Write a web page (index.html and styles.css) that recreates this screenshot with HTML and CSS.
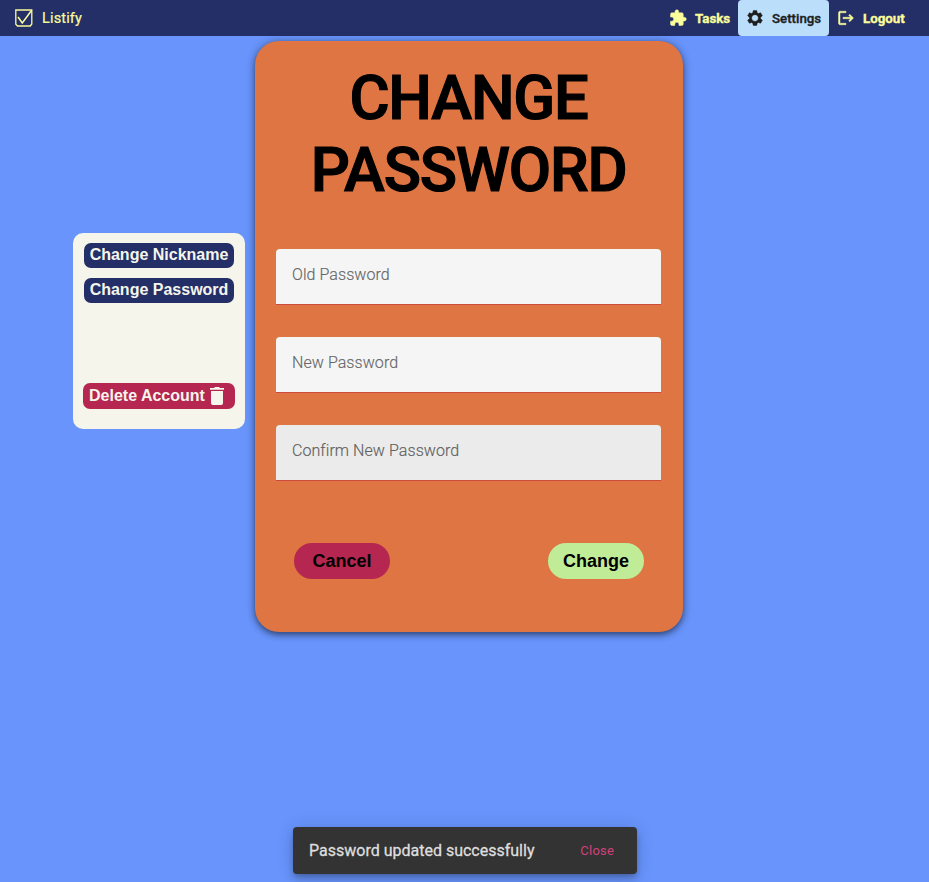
FILE: index.html
```html
<!DOCTYPE html>
<html lang="en">
<head>
<meta charset="utf-8">
<title>Listify</title>
<link rel="stylesheet" href="styles.css">
</head>
<body>
<header class="topbar">
  <a class="brand">
    <svg class="brand-icon" viewBox="0 0 18 18" fill="none" stroke="currentColor"><path d="M.8 1h16v14l-1.500 2H2.500L.8 15.200z" stroke-width="1.300"/><path d="M3 8l4.300 6L16.500 1.500" stroke-width="1.500"/></svg>
    <span>Listify</span>
  </a>
  <nav class="nav">
    <a class="nav-item tasks"><svg viewBox="0 0 24 24"><path d="M20.500 11H19V7c0-1.100-.9-2-2-2h-4V3.500C13 2.120 11.880 1 10.500 1S8 2.120 8 3.500V5H4c-1.100 0-1.990.9-1.990 2v3.800H3.500c1.490 0 2.700 1.210 2.700 2.700s-1.210 2.700-2.700 2.700H2V20c0 1.100.9 2 2 2h3.800v-1.500c0-1.490 1.210-2.700 2.700-2.700 1.490 0 2.700 1.210 2.700 2.700V22H17c1.100 0 2-.9 2-2v-4h1.500c1.380 0 2.500-1.120 2.500-2.500S21.880 11 20.500 11z"/></svg><span>Tasks</span></a>
    <a class="nav-item settings active"><svg viewBox="0 0 24 24"><path d="M19.430 12.980c.04-.32.070-.64.070-.98s-.03-.66-.07-.98l2.110-1.650c.19-.15.240-.42.120-.64l-2-3.460c-.12-.22-.39-.3-.61-.22l-2.490 1c-.52-.4-1.080-.73-1.690-.98l-.38-2.650C14.460 2.180 14.250 2 14 2h-4c-.25 0-.46.180-.49.420l-.38 2.650c-.61.250-1.170.590-1.690.980l-2.490-1c-.23-.09-.49 0-.61.220l-2 3.460c-.13.220-.07.490.120.640l2.110 1.650c-.04.320-.07.650-.07.980s.03.660.070.980l-2.110 1.650c-.19.150-.24.420-.12.640l2 3.460c.12.220.39.300.61.220l2.490-1c.52.400 1.080.730 1.690.980l.38 2.650c.03.240.24.420.49.420h4c.25 0 .46-.18.490-.42l.38-2.650c.61-.25 1.170-.59 1.690-.98l2.490 1c.23.090.49 0 .61-.22l2-3.460c.12-.22.070-.49-.12-.64l-2.110-1.650zM12 16.500c-2.490 0-4.500-2.010-4.500-4.500s2.010-4.500 4.500-4.500 4.500 2.010 4.500 4.500-2.010 4.500-4.500 4.500z"/></svg><span>Settings</span></a>
    <a class="nav-item logout"><svg viewBox="0 0 24 24"><path d="M17 7l-1.410 1.410L18.170 11H8v2h10.170l-2.580 2.580L17 17l5-5zM4 5h8V3H4c-1.100 0-2 .9-2 2v14c0 1.100.9 2 2 2h8v-2H4V5z"/></svg><span>Logout</span></a>
  </nav>
</header>
<main class="page">
  <aside class="side-menu">
    <button class="side-button">Change Nickname</button>
    <button class="side-button">Change Password</button>
    <button class="side-button delete"><span>Delete Account</span><svg viewBox="0 0 14 18"><path d="M1 4h12v12.300q0 1.700-1.700 1.700H2.700Q1 18 1 16.300zM0 1h4l1-1h4l1 1h4v1.800H0z"/></svg></button>
  </aside>
  <form class="card">
    <h1>CHANGE PASSWORD</h1>
    <div class="fields">
      <label class="field">Old Password</label>
      <label class="field">New Password</label>
      <label class="field hovered">Confirm New Password</label>
    </div>
    <div class="actions">
      <button type="button" class="pill cancel">Cancel</button>
      <button type="button" class="pill change">Change</button>
    </div>
  </form>
</main>
<div class="toast" role="status"><span>Password updated successfully</span><button>Close</button></div>
</body>
</html>
```

FILE: styles.css
```css
* { box-sizing: border-box; }
body {
  margin: 0;
  height: 882px;
  overflow: hidden;
  background: #6894fb;
  font-family: Roboto, "Liberation Sans", sans-serif;
}
button { border: 0; padding: 0; font-family: "Liberation Sans", sans-serif; }
.topbar {
  display: flex;
  justify-content: space-between;
  height: 36px;
  padding: 0 16px 0 15px;
  background: #232f66;
  color: #fbfc9b;
}
.brand { display: flex; align-items: center; gap: 9px; letter-spacing: .15px; }
.brand span { font-size: 14.500px; -webkit-text-stroke: .2px; }
.brand-icon { width: 18px; height: 18px; }
.nav { display: flex; }
.nav-item {
  display: flex;
  align-items: center;
  gap: 8px;
  padding: 0 8px;
  border-radius: 4px;
  font-size: 13.300px;
  font-weight: 700;
}
.nav-item svg { flex: none; width: 18px; height: 18px; fill: currentColor; stroke: currentColor; stroke-width: .6px; overflow: visible; }
.nav-item span { padding-top: 1px; -webkit-text-stroke: .35px; }
.nav-item.tasks { width: 77px; }
.nav-item.settings { width: 91px; }
.nav-item.logout { width: 84px; }
.nav-item.active { background: #bbdefb; color: #1e1e1e; font-weight: 500; }
.page { display: flex; align-items: flex-start; gap: 10px; padding: 5px 0 0 73px; }
.side-menu {
  display: flex;
  flex-direction: column;
  align-items: center;
  width: 172px;
  height: 196px;
  margin-top: 192px;
  padding-top: 10px;
  border-radius: 10px;
  background: #f5f5ec;
}
.side-button {
  width: 150px;
  height: 25px;
  margin-bottom: 10px;
  padding-bottom: 2px;
  border-radius: 7px;
  background: #232f66;
  color: #f5f5ec;
  font-size: 16px;
  font-weight: 700;
  white-space: nowrap;
}
.side-button.delete {
  display: flex;
  align-items: center;
  gap: 5px;
  width: 152px;
  height: 26px;
  margin-top: 70px;
  padding: 0 6px;
  background: #b52650;
}
.delete svg { width: 14px; height: 18px; flex: none; fill: currentColor; }
.card {
  width: 428px;
  height: 591px;
  padding: 21px 22px 20px 21px;
  border-radius: 24px;
  background: #df7543;
  box-shadow: 0 3px 5px -1px rgba(0,0,0,.2), 0 1px 10px rgba(0,0,0,.32), 0 3px 7px rgba(0,0,0,.22);
}
h1 {
  margin: 0;
  color: #000;
  font-size: 61.500px;
  font-weight: 500;
  line-height: 72px;
  letter-spacing: -1.200px;
  text-align: center;
  -webkit-text-stroke: 1.200px #000;
}
.fields { display: grid; gap: 32px; margin-top: 43px; }
.field {
  height: 56px;
  padding: 16px;
  border-bottom: 1px solid #cd4a3f;
  border-radius: 4px 4px 0 0;
  background: #f5f5f5;
  color: #666;
  font-size: 16px;
  font-weight: 300;
  line-height: 19px;
  letter-spacing: .07px;
  -webkit-text-stroke: .15px;
}
.field.hovered { background: #ebebeb; color: #606060; }
.actions { display: flex; justify-content: space-between; padding: 62px 17px 0 18px; }
.pill { width: 96px; height: 36px; border-radius: 18px; color: #000; font-size: 18px; font-weight: 700; }
.cancel { background: #b52650; }
.change { background: #c0ec98; }
.toast {
  position: absolute;
  left: 293px;
  bottom: 8px;
  display: flex;
  align-items: center;
  justify-content: space-between;
  width: 344px;
  height: 47px;
  padding: 0 23px 0 16px;
  border-radius: 4px;
  background: #333;
  color: #dedede;
  font-size: 16px;
  box-shadow: 0 3px 5px -1px rgba(0,0,0,.2), 0 6px 10px rgba(0,0,0,.14), 0 1px 18px rgba(0,0,0,.12);
}
.toast span { -webkit-text-stroke: .3px; }
.toast button { background: none; color: #d0417c; font-family: Roboto, sans-serif; font-size: 13px; letter-spacing: .2px; }
```
